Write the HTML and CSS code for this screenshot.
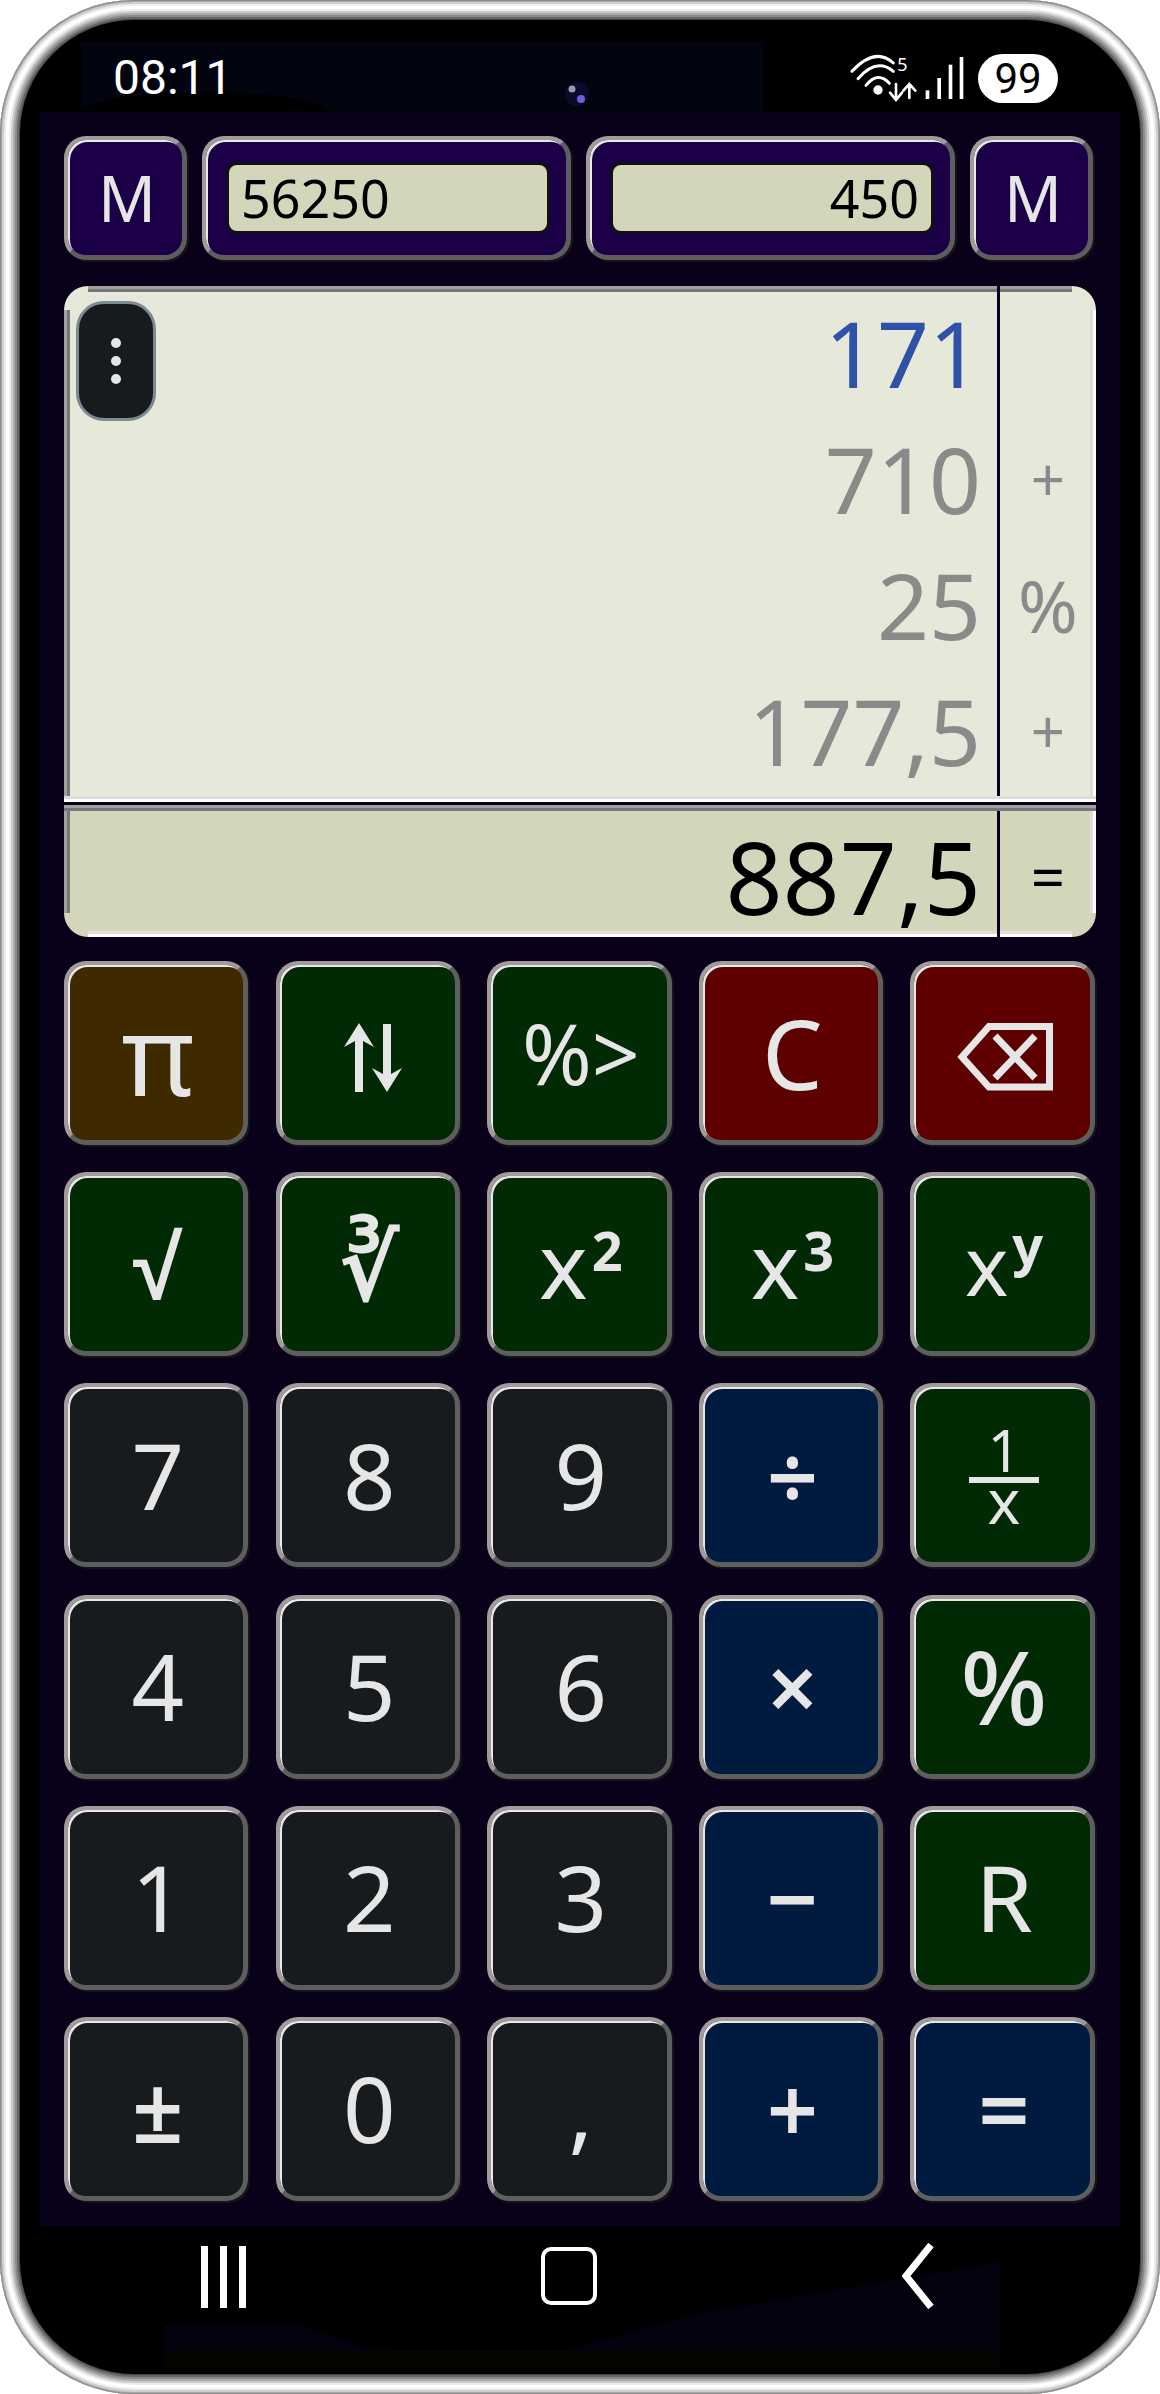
FILE: index.html
```html
<!DOCTYPE html>
<html lang="en">
<head>
    <meta charset="UTF-8">
    <meta name="viewport" content="width=device-width, initial-scale=1.0">
    <title>Calculator</title>
    <link rel="stylesheet" href="styles.css">
</head>
<body>
    <div class="phone">
        <div class="status">
            <span class="clock">08:11</span>
            <svg class="camera" viewBox="0 0 30 30"><circle cx="15" cy="15" r="12" fill="#0a0c2c"/><circle cx="10" cy="10" r="3.5" fill="#9a9ab0"/><circle cx="19" cy="20" r="4" fill="#6a5fd8"/></svg>
            <div class="status-right">
                <svg class="signal" width="120" height="60" viewBox="0 0 360 180" fill="none" stroke="#fff" stroke-linecap="round">
                    <path d="M6 70 Q75 -5 130 45" stroke-width="9"/>
                    <path d="M24 92 Q80 28 130 70" stroke-width="9"/>
                    <path d="M48 112 Q84 68 118 106" stroke-width="9"/>
                    <circle cx="84" cy="126" r="14" fill="#fff" stroke="none"/>
                    <text x="142" y="68" class="wifi-num">5</text>
                    <path d="M138 108 V156 M120 134 L138 156 L156 134" stroke-width="8"/>
                    <path d="M178 108 V150 M160 128 L178 108 L196 128" stroke-width="8"/>
                    <g fill="#fff" stroke="none">
                        <rect x="227" y="127" width="11" height="26"/>
                        <rect x="262" y="90" width="11" height="63"/>
                        <rect x="296" y="50" width="11" height="103"/>
                        <rect x="329" y="27" width="11" height="126"/>
                    </g>
                </svg>
                <span class="battery">99</span>
            </div>
        </div>

        <div class="app">
            <div class="memory">
                <button class="key key-mem">M</button>
                <div class="key key-mem"><span class="lcd">56250</span></div>
                <div class="key key-mem"><span class="lcd lcd-right">450</span></div>
                <button class="key key-mem">M</button>
            </div>

            <div class="display">
                <div class="tape">
                    <button class="menu-btn"><i></i><i></i><i></i></button>
                    <div class="row current"><span class="num">171</span><span class="op"></span></div>
                    <div class="row"><span class="num">710</span><span class="op">+</span></div>
                    <div class="row"><span class="num">25</span><span class="op op-pct">%</span></div>
                    <div class="row"><span class="num">177,5</span><span class="op">+</span></div>
                </div>
                <div class="result">
                    <span class="num">887,5</span><span class="op">=</span>
                </div>
            </div>

            <div class="keypad">
                <button class="key key-brown key-pi">π</button>
                <button class="key key-green">
                    <svg class="icon-swap" width="66" height="70" viewBox="0 0 66 70" fill="#e6e6e6"><path d="M19 0 L34 24 L23 18 V69 H15 V18 L4 24 Z"/><path d="M47 69 L62 45 L51 51 V1 H43 V51 L32 45 Z"/></svg>
                </button>
                <button class="key key-green key-mid">%&gt;</button>
                <button class="key key-red key-c">C</button>
                <button class="key key-red">
                    <svg class="icon-back" width="96" height="68" viewBox="0 0 96 68" fill="none" stroke="#e6e6e6" stroke-width="7"><path d="M32 3.5 H92.5 V64 H32 L5 34 Z"/><path d="M38 13 L78 55 M78 13 L38 55"/></svg>
                </button>

                <button class="key key-green key-root">√</button>
                <button class="key key-green key-root">∛</button>
                <button class="key key-green"><span>x<sup>2</sup></span></button>
                <button class="key key-green"><span>x<sup>3</sup></span></button>
                <button class="key key-green key-xy"><span>x<sup>y</sup></span></button>

                <button class="key key-dark">7</button>
                <button class="key key-dark">8</button>
                <button class="key key-dark">9</button>
                <button class="key key-blue key-op">÷</button>
                <button class="key key-green frac"><span class="frac-top">1</span><span class="frac-bot">x</span></button>

                <button class="key key-dark">4</button>
                <button class="key key-dark">5</button>
                <button class="key key-dark">6</button>
                <button class="key key-blue key-op">×</button>
                <button class="key key-green key-pct">%</button>

                <button class="key key-dark">1</button>
                <button class="key key-dark">2</button>
                <button class="key key-dark">3</button>
                <button class="key key-blue key-op">−</button>
                <button class="key key-green">R</button>

                <button class="key key-dark key-op">±</button>
                <button class="key key-dark">0</button>
                <button class="key key-dark">,</button>
                <button class="key key-blue key-op">+</button>
                <button class="key key-blue key-op">=</button>
            </div>
        </div>

        <div class="nav">
            <svg class="nav-haze" width="1160" height="167" viewBox="0 2227 1160 167"><path d="M164 2325 L296 2323 L355 2345 L450 2358 L540 2358 L690 2315 L800 2296 L1000 2262 V2368 H164 Z" fill="#02030f"/><path d="M164 2350 H1000 V2368 H164 Z" fill="#040500"/></svg>
            <svg class="nav-icon" width="46" height="66" viewBox="0 0 46 66" fill="#fff"><rect x="0" y="3" width="7" height="62"/><rect x="19" y="3" width="7" height="62"/><rect x="38" y="3" width="7" height="62"/></svg>
            <svg class="nav-icon" width="56" height="66" viewBox="0 0 56 66" fill="none" stroke="#fff" stroke-width="4"><rect x="2" y="6" width="52" height="54" rx="8"/></svg>
            <svg class="nav-icon" width="34" height="66" viewBox="0 0 34 66" fill="none" stroke="#fff" stroke-width="7"><path d="M29 2 L4 33 L29 64"/></svg>
        </div>
    </div>
</body>
</html>
```

FILE: styles.css
```css
* {
    box-sizing: border-box;
}
body {
    margin: 0;
    background-color: #fff;
    font-family: "Noto Sans", sans-serif;
}
button {
    font-family: inherit;
    padding: 0;
}
.phone {
    position: relative;
    width: 1160px;
    height: 2394px;
    border-radius: 134px;
    background-color: #000;
    box-shadow:
        inset 0 0 0 1px #8c8c8c,
        inset 0 0 0 2px #a8a8a8,
        inset 0 0 0 4px #cfcfcf,
        inset 0 0 0 6px #eee,
        inset 0 0 0 9px #fff,
        inset 0 0 0 11px #eee,
        inset 0 0 0 13px #ccc,
        inset 0 0 0 15px #aaa,
        inset 0 0 0 17px #8a8a8a,
        inset 0 0 0 19px #666,
        inset 0 0 0 20px #444;
}

/* status bar */
.status {
    position: relative;
    height: 112px;
    padding: 44px 102px 0 113px;
    display: flex;
    justify-content: space-between;
    align-items: center;
    color: #fff;
    background:
        radial-gradient(ellipse 125px 20px at 205px 112px, #000 98%, transparent 100%),
        linear-gradient(#02040f, #02040f) 81px 42px / 682px 70px no-repeat;
}
.clock {
    font-family: Roboto, sans-serif;
    font-size: 48px;
    margin-top: -2px;
}
.camera {
    position: absolute;
    left: 562px;
    top: 79px;
    width: 30px;
    height: 30px;
}
.status-right {
    display: flex;
    align-items: center;
    gap: 8px;
}
.wifi-num {
    font-family: "Noto Sans", sans-serif;
    font-size: 54px;
    fill: #fff;
    stroke: none;
}
.battery {
    width: 80px;
    height: 49px;
    border-radius: 25px;
    background-color: #fff;
    color: #000;
    font-family: Roboto, sans-serif;
    font-size: 42px;
    line-height: 49px;
    text-align: center;
}

/* app area */
.app {
    height: 2115px;
    margin: 0 40px;
    padding: 24px 27px 0 24px;
    background-color: #090019;
}
.key {
    display: flex;
    align-items: center;
    justify-content: center;
    padding-left: 4px;
    border-style: solid;
    border-width: 4px 5px 5px 4px;
    border-color: #a39b9b #5e5e5e #5e5e5e #a39b9b;
    border-radius: 22px;
    box-shadow: inset 2px 2px 0 #e8e8e8, 2px 2px 0 #14141a;
    color: #e6e6e6;
    font-size: 92px;
    line-height: 1;
}
.memory {
    display: grid;
    grid-template-columns: 123px 1fr 1fr 123px;
    gap: 15px;
    height: 124px;
}
.key-mem {
    background-color: #1b0048;
    font-size: 64px;
}
.lcd {
    display: block;
    width: 324px;
    height: 72px;
    padding: 0 12px;
    border: 3px solid #111;
    border-radius: 11px;
    background-color: #d4d6bc;
    color: #000;
    font-size: 52px;
    line-height: 66px;
}
.lcd-right {
    text-align: right;
}

/* tape + result */
.display {
    margin-top: 26px;
    width: 1032px;
}
.tape {
    position: relative;
    height: 516px;
    padding: 4px 0 8px;
    border-radius: 24px 24px 0 0;
    background:
        linear-gradient(#0a0020, #0a0020) 933px 0 / 3px calc(100% - 6px) no-repeat,
        linear-gradient(#ddd 50%, #fff 50%) 0 100% / 100% 6px no-repeat,
        linear-gradient(#a0a0a0 50%, #777 50%) 24px 0 / calc(100% - 48px) 6px no-repeat,
        linear-gradient(90deg, #a0a0a0 50%, #777 50%) 0 24px / 6px 100% no-repeat,
        linear-gradient(90deg, #ddd 50%, #fff 50%) 100% 24px / 6px 100% no-repeat,
        #e6e8da;
}
.result {
    display: grid;
    grid-template-columns: 933px 1fr;
    column-gap: 3px;
    align-items: center;
    height: 132px;
    margin-top: 3px;
    padding: 9px 0 0;
    border-radius: 0 0 24px 24px;
    color: #000;
    background:
        linear-gradient(#0a0020, #0a0020) 933px 6px / 3px 100% no-repeat,
        linear-gradient(#a0a0a0 50%, #777 50%) 0 0 / 100% 6px no-repeat,
        linear-gradient(#ddd 50%, #fff 50%) 24px 100% / calc(100% - 48px) 6px no-repeat,
        linear-gradient(90deg, #a0a0a0 50%, #777 50%) 0 6px / 6px calc(100% - 30px) no-repeat,
        linear-gradient(90deg, #ddd 50%, #fff 50%) 100% 6px / 6px calc(100% - 30px) no-repeat,
        #d4d6bc;
}
.row {
    display: grid;
    grid-template-columns: 933px 1fr;
    column-gap: 3px;
    align-items: center;
    height: 126px;
    color: #8a8a8a;
}
.current {
    color: #2f52a8;
}
.num {
    padding-right: 16px;
    text-align: right;
    font-size: 91px;
    line-height: 1;
}
.result .num {
    font-size: 100px;
}
.op {
    text-align: center;
    font-size: 60px;
    line-height: 1;
}
.op-pct {
    font-size: 72px;
}
.menu-btn {
    position: absolute;
    left: 12px;
    top: 15px;
    width: 80px;
    height: 120px;
    display: flex;
    flex-direction: column;
    align-items: center;
    justify-content: center;
    gap: 8px;
    border: 3px solid #7c8a94;
    border-radius: 28px;
    background-color: #171b1e;
}
.menu-btn i {
    width: 10px;
    height: 10px;
    border-radius: 50%;
    background-color: #e6e6e6;
}

/* keypad */
.keypad {
    display: grid;
    grid-template-columns: repeat(5, 184.4px);
    grid-auto-rows: 184px;
    gap: 27.2px;
    margin-top: 24px;
}
.key-brown { background-color: #3f2a00; }
.key-green { background-color: #002a03; }
.key-red { background-color: #5f0000; }
.key-dark { background-color: #171b1e; }
.key-blue { background-color: #001a40; }
.key-pi { font-size: 112px; }
.key-c { font-size: 96px; }
.key-mid { font-size: 84px; }
.key-op { font-weight: 600; font-size: 90px; }
.key-pct { font-size: 102px; font-weight: 500; }
.key-root { font-size: 90px; font-weight: 700; }
.icon-swap { margin: 10px 0 0 8px; }
.icon-back { margin: 8px 0 0 2px; }
.key sup {
    font-size: 54px;
    line-height: 0;
    font-weight: 700;
    vertical-align: 28px;
    margin-left: 4px;
}
.key-xy {
    font-size: 82px;
}
.key-xy sup {
    vertical-align: 31px;
}
.frac {
    flex-direction: column;
}
.frac-top, .frac-bot {
    width: 70px;
    text-align: center;
}
.frac-top {
    height: 60px;
    font-size: 58px;
    line-height: 54px;
    border-bottom: 6px solid #e6e6e6;
}
.frac-bot {
    height: 44px;
    font-size: 62px;
    line-height: 34px;
}

/* bottom nav */
.nav {
    position: relative;
    display: grid;
    grid-template-columns: 340px 361px auto;
    justify-content: start;
    padding: 16px 0 0 201px;
}
.nav-haze {
    position: absolute;
    left: 0;
    top: 0;
}
.nav-icon {
    position: relative;
}
```
